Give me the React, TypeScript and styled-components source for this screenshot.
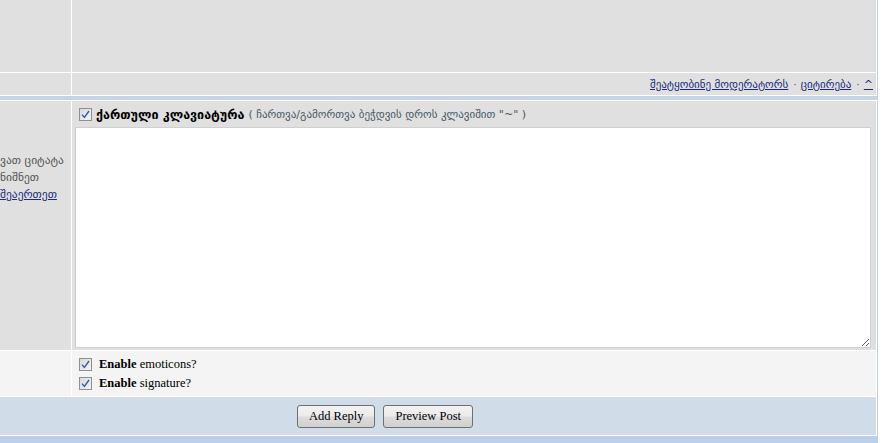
import React from 'react'
import styled, { createGlobalStyle } from 'styled-components'

const GlobalStyle = createGlobalStyle`
  html, body {
    margin: 0;
    padding: 0;
    background: #ffffff;
    overflow: hidden;
  }
`

const georgian = `"DejaVu Sans", "Noto Sans", sans-serif`
const serif = `"Liberation Serif", "Times New Roman", serif`

const Page = styled.div`
  width: 878px;
  background: #ffffff;
`

const Table = styled.div<{ $rows: string }>`
  display: grid;
  grid-template-columns: 71px 1fr;
  grid-template-rows: ${p => p.$rows};
  gap: 1px;
  padding: 0 1px 1px 0;
  border-right: 1px solid #c3cfe0;
  background: #ffffff;
`

const Cell = styled.div<{ $bg?: string; $span?: boolean }>`
  background: ${p => p.$bg || '#dfe0df'};
  grid-column: ${p => (p.$span ? '1 / -1' : 'auto')};
  min-width: 0;
  overflow: hidden;
`

const Divider = styled.div<{ $h: number; $bg: string }>`
  height: ${p => p.$h}px;
  background: ${p => p.$bg};
  margin-bottom: 1px;
`

const LinkBar = styled.div`
  display: flex;
  justify-content: flex-end;
  align-items: center;
  height: 100%;
  padding-right: 3px;
  font-family: ${georgian};
  font-size: 11px;
  color: #5a4a7a;
`

const Link = styled.a`
  color: #1c2a80;
  text-decoration: underline;
  cursor: pointer;
`

const Sep = styled.span`
  padding: 0 4px 0 5px;
  color: #6a5a8a;
`

const SideNote = styled.div`
  padding: 51px 0 0 0;
  font-family: ${georgian};
  font-size: 11.5px;
  line-height: 17px;
  color: #555555;
  white-space: nowrap;
`

const EditorCell = styled.div`
  display: flex;
  flex-direction: column;
  height: 100%;
  padding: 6px 5px 2px 3px;
  box-sizing: border-box;
`

const KeyboardToggle = styled.label`
  display: flex;
  align-items: center;
  gap: 4px;
  height: 15px;
  padding-left: 4px;
  margin-bottom: 5px;
  font-family: ${georgian};
  white-space: nowrap;
`

const ToggleTitle = styled.b`
  font-size: 12.5px;
  color: #000000;
`

const ToggleHint = styled.span`
  font-size: 11px;
  color: #4a5866;
`

const Editor = styled.textarea`
  flex: 1;
  width: 100%;
  box-sizing: border-box;
  border: 1px solid #cfcfcf;
  background: #ffffff;
  resize: both;
  outline: none;
  font-family: ${georgian};
  font-size: 12px;
`

const Options = styled.div`
  display: flex;
  flex-direction: column;
  gap: 6px;
  padding: 7px 0 0 7px;
`

const Option = styled.label`
  display: flex;
  align-items: center;
  gap: 7px;
  font-family: ${serif};
  font-size: 12.5px;
  color: #000000;
  line-height: 13px;
`

const Box = styled.span`
  display: inline-flex;
  align-items: center;
  justify-content: center;
  width: 13px;
  height: 13px;
  box-sizing: border-box;
  border: 1px solid #8e8f8f;
  background: linear-gradient(135deg, #d8d9dc 0%, #f4f4f6 100%);
  flex-shrink: 0;
`

const Buttons = styled.div`
  display: flex;
  justify-content: center;
  align-items: center;
  gap: 8px;
  height: 100%;
  padding-right: 106px;
`

const Button = styled.button`
  height: 23px;
  padding: 0 11px;
  border: 1px solid #707070;
  border-radius: 3px;
  background: linear-gradient(#f2f2f2 0%, #ebebeb 48%, #dddddd 52%, #cfcfcf 100%);
  font-family: ${serif};
  font-size: 12.5px;
  color: #000000;
  cursor: pointer;
`

const Check = () => (
  <Box>
    <svg width="9" height="9" viewBox="0 0 9 9">
      <path d="M1 4.6 L3.4 7.4 L8 1" fill="none" stroke="#3a5aa8" strokeWidth="1.4" />
    </svg>
  </Box>
)

export default function App() {
  return (
    <>
      <GlobalStyle />
      <Page>
        <Table $rows="72px 22px">
          <Cell />
          <Cell />
          <Cell />
          <Cell>
            <LinkBar>
              <Link>შეატყობინე მოდერატორს</Link>
              <Sep>·</Sep>
              <Link>ციტირება</Link>
              <Sep>·</Sep>
              <Link>^</Link>
            </LinkBar>
          </Cell>
        </Table>
        <Divider $h={4} $bg="#c6d3e3" />
        <Table $rows="249px 45px 38px">
          <Cell>
            <SideNote>
              ვათ ციტატა<br />
              ნიშნეთ<br />
              <Link>შეაერთეთ</Link>
            </SideNote>
          </Cell>
          <Cell>
            <EditorCell>
              <KeyboardToggle>
                <Check />
                <ToggleTitle>ქართული კლავიატურა</ToggleTitle>
                <ToggleHint>( ჩართვა/გამორთვა ბეჭდვის დროს კლავიშით "~" )</ToggleHint>
              </KeyboardToggle>
              <Editor />
            </EditorCell>
          </Cell>
          <Cell $bg="#f3f4f3" />
          <Cell $bg="#f3f4f3">
            <Options>
              <Option>
                <Check />
                <span><b>Enable</b> emoticons?</span>
              </Option>
              <Option>
                <Check />
                <span><b>Enable</b> signature?</span>
              </Option>
            </Options>
          </Cell>
          <Cell $span $bg="#d1dce9">
            <Buttons>
              <Button>Add Reply</Button>
              <Button>Preview Post</Button>
            </Buttons>
          </Cell>
        </Table>
        <Divider $h={20} $bg="#bcd0ea" />
      </Page>
    </>
  )
}
